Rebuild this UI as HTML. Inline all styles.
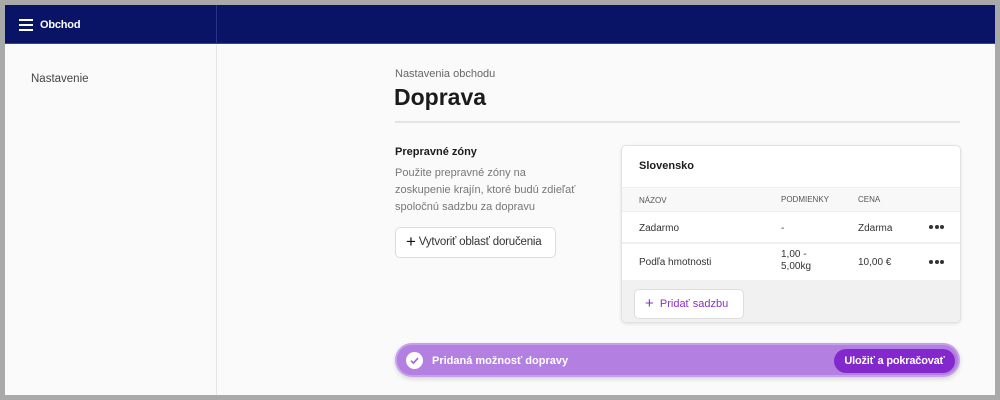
<!DOCTYPE html>
<html><head><meta charset="utf-8"><style>
*{box-sizing:border-box;margin:0;padding:0}
body{width:1000px;height:400px;background:#a9a9a9;font-family:"Liberation Sans",sans-serif;position:relative;overflow:hidden}
.frame{position:absolute;left:5px;top:5px;width:990px;height:390px;background:#fafafa;overflow:hidden}
.hdr{position:absolute;left:0;top:0;width:990px;height:39px;background:#0a1467;border-bottom:1px solid #3a4390}
.hdr .sep{position:absolute;left:211px;top:0;width:1px;height:39px;background:#2a3485}
.ham{position:absolute;left:14px;top:14px;width:14px}
.ham i{display:block;height:1.5px;background:#fff;margin-bottom:3.5px}
.hdr .t{position:absolute;left:35px;top:14px;color:#fff;font-size:11px;font-weight:bold;letter-spacing:-.2px}
.side{position:absolute;left:0;top:40px;width:212px;height:350px;border-right:1px solid #e6e6e6}
.side span{position:absolute;left:26px;top:28px;font-size:11.5px;color:#444}
.abs{position:absolute}
.dots{position:absolute;left:307px;top:13px;display:flex;height:4px}
.dots i{display:block;width:4px;height:4px;border-radius:50%;background:#333;margin-right:1.5px}
</style></head><body>
<div class="frame">
<div class="hdr"><div class="ham"><i></i><i></i><i></i></div><div class="t">Obchod</div><div class="sep"></div></div>
<div class="side"><span>Nastavenie</span></div>
<div class="abs" style="left:390px;top:63px;font-size:11px;color:#666">Nastavenia obchodu</div>
<div class="abs" style="left:389px;top:79px;font-size:23px;font-weight:bold;color:#1b1b1b">Doprava</div>
<div class="abs" style="left:390px;top:116px;width:565px;height:2px;background:#e4e4e4"></div>
<div class="abs" style="left:390px;top:141px;font-size:11px;font-weight:bold;color:#1b1b1b">Prepravné zóny</div>
<div class="abs" style="left:390px;top:160px;width:185px;font-size:11px;line-height:17px;color:#777">Použite prepravné zóny na<br>zoskupenie krajín, ktoré budú zdieľať<br>spoločnú sadzbu za dopravu</div>
<div class="abs" style="left:390px;top:222px;width:161px;height:31px;background:#fff;border:1px solid #ddd;border-radius:5px;font-size:11.5px;color:#333;padding:8px 0 0 10px;letter-spacing:-.2px"><span style="font-size:17px;line-height:12px;vertical-align:-2px;color:#111">+</span> Vytvoriť oblasť doručenia</div>
<div class="abs" style="left:616px;top:140px;width:340px;height:178px;background:#fff;border:1px solid #e2e2e2;border-radius:5px;box-shadow:0 1px 3px rgba(0,0,0,.1);overflow:hidden">
 <div class="abs" style="left:17px;top:14px;font-size:11px;font-weight:bold;color:#1b1b1b">Slovensko</div>
 <div class="abs" style="left:0;top:41px;width:340px;height:25px;background:#f8f8f8;border-top:1px solid #eee;border-bottom:1px solid #eee;font-size:8px;color:#555">
  <span class="abs" style="left:17px;top:8px">NÁZOV</span><span class="abs" style="left:159px;top:7px">PODMIENKY</span><span class="abs" style="left:236px;top:7px">CENA</span></div>
 <div class="abs" style="left:0;top:66px;width:340px;height:32px;border-bottom:2px solid #f0f0f0;font-size:10px;color:#333">
  <span class="abs" style="left:17px;top:11px">Zadarmo</span><span class="abs" style="left:159px;top:11px">-</span><span class="abs" style="left:236px;top:11px">Zdarma</span><span class="dots"><i></i><i></i><i></i></span></div>
 <div class="abs" style="left:0;top:100px;width:340px;height:33px;font-size:10px;color:#333">
  <span class="abs" style="left:17px;top:11px">Podľa hmotnosti</span><span class="abs" style="left:159px;top:3px;line-height:12px">1,00 -<br>5,00kg</span><span class="abs" style="left:236px;top:11px">10,00 €</span><span class="dots" style="top:14px"><i></i><i></i><i></i></span></div>
 <div class="abs" style="left:0;top:134px;width:340px;height:44px;background:#f1f1f1">
  <div class="abs" style="left:12px;top:9px;width:110px;height:30px;background:#fff;border:1px solid #ddd;border-radius:5px;color:#8a30c8;font-size:11px;padding:8px 0 0 10px"><span style="font-size:15px;line-height:10px;vertical-align:-1px">+</span>&nbsp;&nbsp;Pridať sadzbu</div></div>
</div>
<div class="abs" style="left:390px;top:338px;width:565px;height:34px;background:#b380e1;border:2px solid #c6a0ea;border-radius:17px;box-shadow:0 2px 5px rgba(0,0,0,.15)">
 <div class="abs" style="left:9px;top:7px;width:17px;height:17px;border-radius:50%;background:#fff"><svg width="17" height="17" viewBox="0 0 17 17"><path d="M5 8.7l2.4 2.4 4.6-5" fill="none" stroke="#a064d8" stroke-width="1.6"/></svg></div>
 <div class="abs" style="left:35px;top:10px;color:#fff;font-size:11px;font-weight:bold">Pridaná možnosť dopravy</div>
 <div class="abs" style="left:437px;top:4px;width:121px;height:24px;background:#8228cc;border-radius:12px;color:#fff;font-size:11px;font-weight:bold;text-align:center;line-height:24px;letter-spacing:-.2px">Uložiť a pokračovať</div>
</div>
</div>
</body></html>
